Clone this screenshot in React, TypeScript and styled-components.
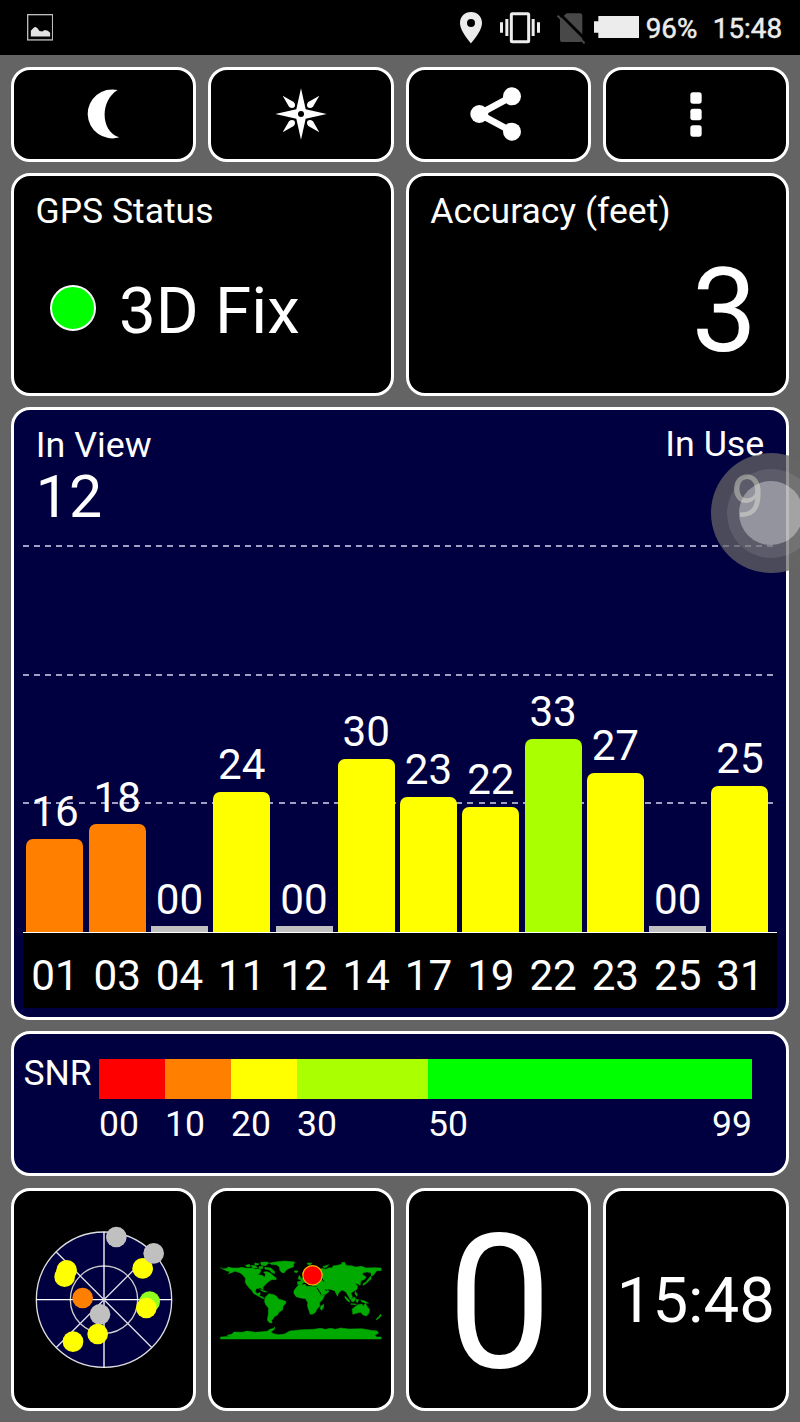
import React from "react";
import styled, { createGlobalStyle } from "styled-components";

const GlobalStyle = createGlobalStyle`
  * { box-sizing: border-box; }
  body { margin: 0; background: #646464; }
`;

const Screen = styled.div`
  position: relative;
  width: 800px;
  height: 1422px;
  overflow: hidden;
  background: #646464;
  color: #fff;
  font-family: Roboto, "Liberation Sans", sans-serif;
  line-height: 1;
`;

const StatusBar = styled.header`
  display: flex;
  align-items: flex-start;
  height: 55px;
  padding-left: 26.5px;
  background: #000;
  color: #ececec;
`;

const StatusIcon = styled.svg<{ $left: number; $top: number }>`
  display: block;
  flex: none;
  margin-left: ${(p) => p.$left}px;
  margin-top: ${(p) => p.$top}px;
`;

const StatusText = styled.span<{ $left: number }>`
  margin: 15px 0 0 ${(p) => p.$left}px;
  font-size: 27.8px;
  white-space: nowrap;
  -webkit-text-stroke: 0.5px #ececec;
`;

const Body = styled.main`
  padding: 11.5px 11.5px 0 11px;
`;

const Row = styled.div<{ $columns: number; $height: number; $top?: number }>`
  display: grid;
  grid-template-columns: repeat(${(p) => p.$columns}, 1fr);
  gap: 12px;
  height: ${(p) => p.$height}px;
  margin-top: ${(p) => p.$top ?? 0}px;
`;

const Panel = styled.section<{ $navy?: boolean }>`
  display: flex;
  flex-direction: column;
  min-width: 0;
  border: 3px solid #fff;
  border-radius: 19px;
  background: ${(p) => (p.$navy ? "#000040" : "#000")};
`;

const IconButton = styled.button`
  display: flex;
  align-items: center;
  justify-content: center;
  padding: 0;
  border: 3px solid #fff;
  border-radius: 19px;
  background: #000;
`;

const Tile = styled(Panel)`
  align-items: center;
  justify-content: center;
`;

const PanelTitle = styled.h2`
  margin: 18px 0 0 21.5px;
  font-size: 35.5px;
  font-weight: 400;
`;

const FixRow = styled.div`
  display: flex;
  align-items: center;
  margin: 44px 0 0 36px;
`;

const FixLight = styled.span`
  width: 46px;
  height: 46px;
  margin: 0 23px 0 0;
  border: 2px solid #fff;
  border-radius: 50%;
  background: #0f0;
`;

const FixText = styled.span`
  padding-top: 4px;
  font-size: 65.5px;
`;

const AccuracyValue = styled.div`
  margin: 23.5px 28.5px 0 0;
  font-size: 116px;
  text-align: right;
`;

const ChartPanel = styled(Panel)`
  height: 613.5px;
  margin-top: 11px;
  padding: 0 8.7px 0 9.3px;
`;

const ChartHeader = styled.div`
  display: flex;
  justify-content: space-between;
  height: 135.6px;
  padding: 17.5px 12.5px 0 12.5px;
`;

const Count = styled.div<{ $right?: boolean }>`
  margin-top: ${(p) => (p.$right ? 0 : 0.6)}px;
  text-align: ${(p) => (p.$right ? "right" : "left")};
`;

const CountLabel = styled.div`
  font-size: 35.8px;
`;

const CountValue = styled.div<{ $right?: boolean }>`
  margin-top: 4px;
  font-size: 59px;
`;

const dashes =
  "repeating-linear-gradient(90deg, #a0a0c4 0 6px, transparent 6px 11.11px)";

const Plot = styled.div`
  display: flex;
  align-items: flex-end;
  gap: 5.27px;
  height: 387px;
  padding-left: 3.2px;
  background-image: ${dashes}, ${dashes}, ${dashes};
  background-repeat: no-repeat;
  background-size: 751px 2px;
  background-position: 0 0, 0 129px, 0 257px;
`;

const BarColumn = styled.div`
  display: flex;
  flex-direction: column;
  align-items: center;
  width: 57px;
`;

const BarValue = styled.span`
  margin-bottom: 5px;
  font-size: 42.2px;
`;

const Bar = styled.div<{ $color: string; $flat: boolean }>`
  width: 57px;
  border-radius: ${(p) => (p.$flat ? "0" : "7px 7px 0 0")};
  background: ${(p) => p.$color};
`;

const Axis = styled.div`
  display: flex;
  gap: 5.27px;
  height: 75.5px;
  padding: 21.7px 0 0 3.2px;
  border-top: 1px solid #fff;
  background: #000;
`;

const AxisLabel = styled.span`
  width: 57px;
  font-size: 42.2px;
  text-align: center;
`;

const SnrPanel = styled(Panel)`
  flex-direction: row;
  height: 144.5px;
  margin-top: 11px;
  padding: 0 33px 0 9.4px;
  font-size: 35.5px;
`;

const SnrTitle = styled.span`
  width: 75.6px;
  margin-top: 21.5px;
`;

const SnrScale = styled.div`
  display: grid;
  grid-template-columns: 66px 66px 66px 131px 324px;
  grid-template-rows: 40px 36px;
  row-gap: 8px;
  margin-top: 24.7px;
`;

const Swatch = styled.span<{ $color: string }>`
  background: ${(p) => p.$color};
`;

const SnrLabel = styled.span`
  display: flex;
  justify-content: space-between;
`;

const BigNumber = styled.span`
  margin: 7px 0 0 2px;
  font-size: 187px;
`;

const Clock = styled.span`
  margin-top: 2px;
  font-size: 63.5px;
`;

const TouchRing = styled.div`
  position: absolute;
  top: 453px;
  left: 711px;
  display: flex;
  align-items: center;
  justify-content: center;
  width: 120px;
  height: 120px;
  border-radius: 50%;
  background: rgba(102, 102, 102, 0.73);
`;

const TouchMiddle = styled.div`
  display: flex;
  align-items: center;
  justify-content: center;
  width: 89px;
  height: 89px;
  border-radius: 50%;
  background: rgba(200, 200, 200, 0.14);
`;

const TouchCore = styled.div`
  width: 64px;
  height: 64px;
  border-radius: 50%;
  background: rgba(255, 255, 255, 0.35);
`;

const ORANGE = "#ff8000";
const YELLOW = "#ffff00";
const LIME = "#aaff00";
const GREY = "#c0c0c0";

const satellites = [
  { id: "01", snr: "16", height: 93.5, color: ORANGE },
  { id: "03", snr: "18", height: 108, color: ORANGE },
  { id: "04", snr: "00", height: 6, color: GREY },
  { id: "11", snr: "24", height: 140.5, color: YELLOW },
  { id: "12", snr: "00", height: 6, color: GREY },
  { id: "14", snr: "30", height: 173.5, color: YELLOW },
  { id: "17", snr: "23", height: 135.5, color: YELLOW },
  { id: "19", snr: "22", height: 125.5, color: YELLOW },
  { id: "22", snr: "33", height: 193.5, color: LIME },
  { id: "23", snr: "27", height: 159.5, color: YELLOW },
  { id: "25", snr: "00", height: 6, color: GREY },
  { id: "31", snr: "25", height: 146.5, color: YELLOW },
];

const skyDots: [number, number, string][] = [
  [367, 174, YELLOW],
  [400, 129, GREY],
  [288, 80, GREY],
  [139, 180, YELLOW],
  [133, 199, YELLOW],
  [187, 263, ORANGE],
  [388, 274, "#90ff20"],
  [378, 293, YELLOW],
  [239, 312, GREY],
  [232, 371, YELLOW],
  [158, 394, YELLOW],
];

const MoonIcon = () => (
  <svg width="34" height="50" viewBox="260 268 102 150">
    <path
      fill="#fff"
      d="M352 271A73.5 73.5 0 1 0 357 413C299 396 299 302 352 271Z"
    />
  </svg>
);

const CompassIcon = () => (
  <svg width="52" height="52" viewBox="-78 -78 156 156" fill="#fff">
    <path d="M0-77 14-14 77 0 14 14 0 77-14 14-77 0-14-14Z" />
    {[0, 90, 180, 270].map((a) => (
      <path
        key={a}
        transform={`rotate(${a})`}
        d="M-55-55-22-36Q-15-28-20-20Q-28-15-36-22Z"
      />
    ))}
    <circle r="9" fill="#000" />
  </svg>
);

const ShareIcon = () => (
  <svg width="57" height="54" viewBox="208 262 171 162">
    <path
      d="M334 290 236 343 334 396"
      fill="none"
      stroke="#fff"
      strokeWidth="20"
    />
    <g fill="#fff">
      <circle cx="236" cy="343" r="27" />
      <circle cx="334" cy="290" r="27" />
      <circle cx="334" cy="396" r="27" />
    </g>
  </svg>
);

const MenuIcon = () => (
  <svg width="12" height="45" viewBox="869 276 36 135" fill="#fff">
    <rect x="870" y="277" width="34" height="34" rx="8" />
    <rect x="870" y="326.5" width="34" height="34" rx="8" />
    <rect x="870" y="376" width="34" height="34" rx="8" />
  </svg>
);

const SkyPlot = () => (
  <svg width="140" height="150" viewBox="41 44 420 450">
    <circle cx="251" cy="268" r="204" fill="#000040" />
    <g fill="none" stroke="#fff" strokeWidth="4">
      <circle cx="251" cy="268" r="203" stroke="#ddd" />
      <circle cx="251" cy="268" r="101" stroke="#ccc" />
      <path d="M47 268H455M251 64V472" />
      <path stroke="#e0e0e8" d="M107 124 395 412M395 124 107 412" />
    </g>
    {skyDots.map(([x, y, color]) => (
      <circle key={`${x}-${y}`} cx={x} cy={y} r="31" fill={color} />
    ))}
  </svg>
);

const WorldMap = () => (
  <svg width="162" height="80" viewBox="43.5 60 486 240">
    <g fill="#00aa00" stroke="#00aa00" strokeWidth="1.5" strokeLinejoin="round">
      <path d="M45 83 52 87 64 85 68 81 80 84 100 84 108 82 125 85 140 84 150 88 160 86 167 91 162 100 157 104 170 106 177 112 180 103 174 96 185 95 193 98 207 110 208 117 195 121 188 126 178 135 173 141 173 149 165 144 152 146 149 155 156 161 163 157 164 163 161 167 170 170 178 176 170 175 158 168 145 161 138 150 131 144 124 135 119 127 120 115 112 105 103 98 88 94 78 98 68 101 74 95 64 93Z" />
      <path d="M120 76 132 73 134 80 124 81ZM136 76 150 77 156 84 142 84ZM148 69 160 71 158 75 148 75ZM165 67 184 66 190 69 180 77 168 76ZM178 82 196 84 208 95 207 101 198 97 192 90 178 87ZM160 80 172 79 171 86 162 86ZM201 112 211 112 212 119 203 118Z" />
      <path d="M192 69 215 65 238 63 268 66 264 73 264 80 247 87 240 92 236 99 228 97 223 91 222 82 214 75 196 73Z" />
      <path d="M163 148 178 153 184 156 176 156 166 151Z" />
      <path d="M180 171 190 161 205 164 213 169 219 177 229 180 241 184 241 190 233 198 231 210 221 216 215 226 206 230 202 238 198 241 200 249 192 248 187 243 186 236 189 220 189 205 180 193 177 184Z" />
      <path d="M266 151 278 136 300 133 302 139 318 139 334 142 340 157 347 168 357 166 352 178 342 188 343 198 334 208 330 217 322 222 314 223 310 210 306 199 307 188 300 176 285 174 272 170 265 160Z" />
      <path d="M355 193 354 203 348 211 344 206 346 198Z" />
      <path d="M277 134 276 125 287 124 285 118 295 112 303 108 292 104 292 96 304 88 318 82 332 84 342 88 350 85 360 88 372 83 380 84 382 78 400 75 415 70 425 77 438 77 450 81 468 79 482 84 505 83 527 84 527 92 514 92 510 97 504 105 498 109 496 98 485 96 473 98 470 103 482 111 478 117 466 123 464 136 457 132 449 129 457 140 453 149 441 156 436 160 441 170 435 179 423 159 418 154 409 150 399 159 396 169 388 153 379 149 364 147 371 154 362 162 347 167 341 158 333 146 334 139 321 138 321 131 315 135 306 126 292 128 288 134Z" />
      <path d="M281 106 287 114 284 119 278 117ZM268 92 278 93 274 98 266 96ZM305 69 319 69 314 76 306 73ZM352 80 370 74 364 81 356 84ZM408 68 418 67 419 71 410 72Z" />
      <path d="M496 108 497 117 489 124 481 131 473 136 472 132 480 127 486 120 491 114Z" />
      <path d="M418 168 428 177 434 187 426 183 419 175ZM437 177 447 171 450 177 444 186 438 184ZM452 178 460 179 455 188 452 184ZM436 191 452 192 452 194 436 193ZM450 154 456 165 454 169 448 161ZM466 180 478 183 489 190 478 189 468 185Z" />
      <path d="M440 207 448 201 457 194 469 192 473 199 480 190 485 200 492 208 490 220 483 228 473 225 465 217 452 220 442 223Z" />
      <path d="M525 222 527 228 521 234 513 240 513 236 520 230Z" />
      <path d="M45 297V291L76 289 64 286 80 282 85 276 110 277 125 273 150 277 185 274 193 268 205 265 208 260 207 268 196 276 204 281 220 284 237 282 253 273 290 269 325 268 345 265 360 268 375 265 390 268 405 264 430 267 470 266 495 271 515 273 519 280 508 285 513 291 527 291V297Z" />
    </g>
    <path
      fill="none"
      stroke="#000"
      strokeWidth="3"
      d="M335 144 347 163M347 113 355 125M318 126 335 127M359 149 365 152"
    />
    <circle cx="321" cy="106" r="29" fill="#f00" stroke="#ffb000" strokeWidth="3.5" />
  </svg>
);

export default function App() {
  return (
    <Screen>
      <GlobalStyle />
      <StatusBar>
        <StatusIcon $left={0} $top={14.3} width="26.3" height="26.6" viewBox="79.5 42.5 79 80">
          <rect x="81.5" y="44.5" width="75" height="76" fill="none" stroke="#bdbdbd" strokeWidth="4" />
          <path fill="#e2e2e2" d="M91 110V93L98 85 104 81 111 85 117 94 125 95 133 91 142 93 149 99V110Z" />
        </StatusIcon>
        <StatusIcon $left={407.2} $top={12} width="22" height="31.5" viewBox="180 36 66 94.5">
          <path
            fill="#ececec"
            fillRule="evenodd"
            d="M213 36C194 36 180 50 180 69C180 94 213 130 213 130S246 94 246 69C246 50 232 36 213 36ZM213 57a12 12 0 1 1 0 24a12 12 0 0 1 0-24Z"
          />
        </StatusIcon>
        <StatusIcon $left={18} $top={12} width="40" height="31.5" viewBox="300 36 120 94.5">
          <rect x="334" y="41" width="52" height="84" rx="3" fill="none" stroke="#ececec" strokeWidth="9" />
          <path fill="#ececec" d="M300 67h9v31h-9ZM316 57h9v51h-9ZM395 57h9v51h-9ZM411 67h9v31h-9Z" />
        </StatusIcon>
        <StatusIcon $left={17} $top={12} width="28.5" height="32" viewBox="471 36 85.5 96">
          <path fill="#484848" d="M500 40H540Q547 40 547 47V119Q547 126 540 126H488Q480 126 480 119V58Z" />
          <path stroke="#000" strokeWidth="8" d="M474 36 562 124" />
          <path stroke="#484848" strokeWidth="6" d="M473 47 554 130" />
        </StatusIcon>
        <StatusIcon $left={8.4} $top={16} width="45.3" height="22" viewBox="581 48 136 66">
          <path fill="#ececec" d="M594 48H717V114H594V98H581V64H594Z" />
        </StatusIcon>
        <StatusText $left={6.5}>96%</StatusText>
        <StatusText $left={15.5}>15:48</StatusText>
      </StatusBar>

      <Body>
        <Row $columns={4} $height={95.5}>
          <IconButton aria-label="Night mode"><MoonIcon /></IconButton>
          <IconButton aria-label="Compass"><CompassIcon /></IconButton>
          <IconButton aria-label="Share"><ShareIcon /></IconButton>
          <IconButton aria-label="Menu"><MenuIcon /></IconButton>
        </Row>

        <Row $columns={2} $height={222.5} $top={11}>
          <Panel>
            <PanelTitle>GPS Status</PanelTitle>
            <FixRow>
              <FixLight />
              <FixText>3D Fix</FixText>
            </FixRow>
          </Panel>
          <Panel>
            <PanelTitle>Accuracy (feet)</PanelTitle>
            <AccuracyValue>3</AccuracyValue>
          </Panel>
        </Row>

        <ChartPanel $navy>
          <ChartHeader>
            <Count>
              <CountLabel>In View</CountLabel>
              <CountValue>12</CountValue>
            </Count>
            <Count $right>
              <CountLabel>In Use</CountLabel>
              <CountValue>9</CountValue>
            </Count>
          </ChartHeader>
          <Plot>
            {satellites.map((s) => (
              <BarColumn key={s.id}>
                <BarValue>{s.snr}</BarValue>
                <Bar $color={s.color} $flat={s.color === GREY} style={{ height: s.height }} />
              </BarColumn>
            ))}
          </Plot>
          <Axis>
            {satellites.map((s) => (
              <AxisLabel key={s.id}>{s.id}</AxisLabel>
            ))}
          </Axis>
        </ChartPanel>

        <SnrPanel $navy>
          <SnrTitle>SNR</SnrTitle>
          <SnrScale>
            <Swatch $color="#ff0000" />
            <Swatch $color={ORANGE} />
            <Swatch $color={YELLOW} />
            <Swatch $color={LIME} />
            <Swatch $color="#00ff00" />
            <SnrLabel>00</SnrLabel>
            <SnrLabel>10</SnrLabel>
            <SnrLabel>20</SnrLabel>
            <SnrLabel>30</SnrLabel>
            <SnrLabel>
              <span>50</span>
              <span>99</span>
            </SnrLabel>
          </SnrScale>
        </SnrPanel>

        <Row $columns={4} $height={223.5} $top={12.3}>
          <Tile><SkyPlot /></Tile>
          <Tile><WorldMap /></Tile>
          <Tile><BigNumber>0</BigNumber></Tile>
          <Tile><Clock>15:48</Clock></Tile>
        </Row>
      </Body>

      <TouchRing>
        <TouchMiddle>
          <TouchCore />
        </TouchMiddle>
      </TouchRing>
    </Screen>
  );
}
